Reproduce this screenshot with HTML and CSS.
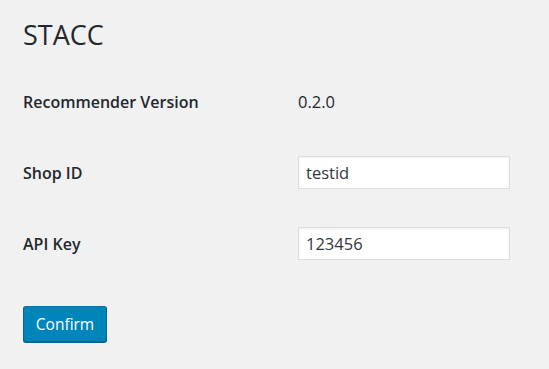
FILE: index.html
```html
<!DOCTYPE html>
<html lang="en">
<head>
<meta charset="utf-8">
<title>STACC</title>
<link rel="stylesheet" href="styles.css">
</head>
<body>
<div class="wrap">
  <h1 class="page-title">STACC</h1>
  <form class="settings">
    <div class="form-table">
      <div class="row">
        <div class="label">Recommender Version</div>
        <div class="field"><span class="value">0.2.0</span></div>
      </div>
      <div class="row">
        <label class="label" for="shop-id">Shop ID</label>
        <div class="field"><input id="shop-id" class="text-input" type="text" value="testid"></div>
      </div>
      <div class="row">
        <label class="label" for="api-key">API Key</label>
        <div class="field"><input id="api-key" class="text-input" type="text" value="123456"></div>
      </div>
    </div>
    <div class="submit">
      <button type="button" class="button-primary">Confirm</button>
    </div>
  </form>
</div>
</body>
</html>
```

FILE: styles.css
```css
html, body {
  margin: 0;
  padding: 0;
  background: #f1f1f1;
}

body {
  width: 549px;
  height: 369px;
  overflow: hidden;
  font-family: "Open Sans", "Noto Sans", sans-serif;
  color: #23282d;
}

.wrap {
  padding: 17px 23px 0 23px;
}

.page-title {
  margin: 0;
  font-size: 27px;
  font-weight: 400;
  line-height: 36px;
  color: #23282d;
}

.form-table {
  display: grid;
  grid-auto-rows: 71px;
  margin-top: 13px;
}

.row {
  display: grid;
  grid-template-columns: 275px 212px;
  align-items: center;
}

.label {
  font-size: 16px;
  font-weight: 600;
  color: #23282d;
}

.value {
  font-size: 16.5px;
  color: #23282d;
}

.text-input {
  box-sizing: border-box;
  display: block;
  width: 212px;
  height: 33px;
  margin: 0;
  padding: 0 7px;
  border: 1px solid #ddd;
  border-radius: 0;
  background: #fff;
  box-shadow: inset 0 1px 2px rgba(0, 0, 0, 0.07);
  font-family: "Open Sans", "Noto Sans", sans-serif;
  font-size: 16.5px;
  color: #32373c;
  outline: none;
}

.submit {
  margin-top: 27px;
}

.button-primary {
  box-sizing: border-box;
  width: 84px;
  height: 36px;
  padding: 0;
  border: 1px solid #0073aa;
  border-color: #0073aa #006799 #006799;
  border-radius: 3px;
  background: #0085ba;
  box-shadow: 0 1px 0 #006799;
  color: #fff;
  font-family: "Open Sans", "Noto Sans", sans-serif;
  font-size: 15.5px;
  line-height: 34px;
  text-align: center;
  cursor: pointer;
}
```
